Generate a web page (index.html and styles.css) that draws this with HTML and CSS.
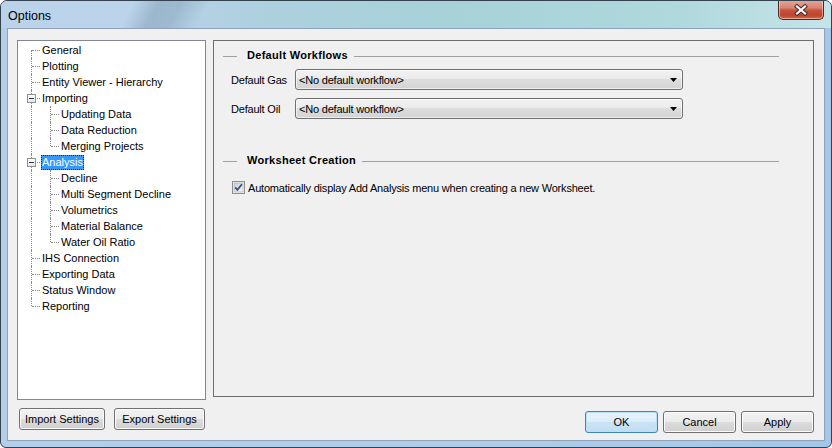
FILE: index.html
```html
<!DOCTYPE html>
<html>
<head>
<meta charset="utf-8">
<title>Options</title>
<link rel="stylesheet" href="styles.css">
</head>
<body>
<div class="window">
  <div class="titlebar">
    <span class="title">Options</span>
    <button class="close" aria-label="Close">
      <svg width="16" height="12" viewBox="0 0 16 12">
        <path d="M4 2.5 L12 9.5 M12 2.5 L4 9.5" stroke="#4a2a2a" stroke-width="4.2" stroke-linecap="square" fill="none"/>
        <path d="M4 2.5 L12 9.5 M12 2.5 L4 9.5" stroke="#ffffff" stroke-width="2.2" stroke-linecap="square" fill="none"/>
      </svg>
    </button>
  </div>
  <div class="client">
    <div class="main">
      <div class="tree">
        <div class="row l0 first"><span class="label">General</span></div>
        <div class="row l0"><span class="label">Plotting</span></div>
        <div class="row l0"><span class="label">Entity Viewer - Hierarchy</span></div>
        <div class="row l0"><span class="exp"></span><span class="label">Importing</span></div>
        <div class="row l1"><span class="label">Updating Data</span></div>
        <div class="row l1"><span class="label">Data Reduction</span></div>
        <div class="row l1 lastchild"><span class="label">Merging Projects</span></div>
        <div class="row l0"><span class="exp"></span><span class="label sel">Analysis</span></div>
        <div class="row l1"><span class="label">Decline</span></div>
        <div class="row l1"><span class="label">Multi Segment Decline</span></div>
        <div class="row l1"><span class="label">Volumetrics</span></div>
        <div class="row l1"><span class="label">Material Balance</span></div>
        <div class="row l1 lastchild"><span class="label">Water Oil Ratio</span></div>
        <div class="row l0"><span class="label">IHS Connection</span></div>
        <div class="row l0"><span class="label">Exporting Data</span></div>
        <div class="row l0"><span class="label">Status Window</span></div>
        <div class="row l0 last"><span class="label">Reporting</span></div>
      </div>
      <div class="panel">
        <div class="sec"><span>Default Workflows</span></div>
        <div class="field">
          <span class="flabel">Default Gas</span>
          <div class="select"><span>&lt;No default workflow&gt;</span>
            <svg class="arrow" width="7" height="4" viewBox="0 0 7 4"><path d="M0 0 H7 L3.5 4 Z" fill="#000"/></svg>
          </div>
        </div>
        <div class="field second">
          <span class="flabel">Default Oil</span>
          <div class="select"><span>&lt;No default workflow&gt;</span>
            <svg class="arrow" width="7" height="4" viewBox="0 0 7 4"><path d="M0 0 H7 L3.5 4 Z" fill="#000"/></svg>
          </div>
        </div>
        <div class="sec sec2"><span>Worksheet Creation</span></div>
        <div class="check">
          <svg class="box" width="13" height="13" viewBox="0 0 13 13">
            <defs>
              <linearGradient id="cb" x1="0" y1="0" x2="1" y2="1">
                <stop offset="0" stop-color="#cbcfd5"/>
                <stop offset="1" stop-color="#f6f6f6"/>
              </linearGradient>
            </defs>
            <rect x="0.5" y="0.5" width="12" height="12" fill="#f4f4f4" stroke="#8e8f8f"/>
            <rect x="2" y="2" width="9" height="9" fill="url(#cb)" stroke="#a9acb0" stroke-width="0.6"/>
            <path d="M3.2 6.4 L5.4 8.9 L9.9 3.3" stroke="#3f4f87" stroke-width="1.8" fill="none"/>
          </svg>
          <span>Automatically display Add Analysis menu when creating a new Worksheet.</span>
        </div>
      </div>
    </div>
    <div class="footer">
      <div class="left">
        <button class="btn imp">Import Settings</button>
        <button class="btn exp-btn">Export Settings</button>
      </div>
      <div class="right">
        <button class="btn dlg default">OK</button>
        <button class="btn dlg">Cancel</button>
        <button class="btn dlg">Apply</button>
      </div>
    </div>
  </div>
</div>
</body>
</html>
```
FILE: styles.css
```css
html, body {
  margin: 0;
  padding: 0;
  background: #ffffff;
}

.window {
  width: 832px;
  height: 448px;
  box-sizing: border-box;
  border: 1px solid #34414f;
  border-radius: 7px 7px 6px 6px;
  overflow: hidden;
  display: flex;
  flex-direction: column;
  background: linear-gradient(to right, #b5cfe9 0%, #afcbe7 60%, #a6c6e8 100%);
  font-family: "Liberation Sans", Arial, sans-serif;
}

.titlebar {
  height: 27px;
  flex: none;
  display: flex;
  align-items: flex-start;
  padding-left: 7px;
  background:
    linear-gradient(118deg, rgba(255,255,255,0) 0px, rgba(255,255,255,0) 118px, rgba(120,150,175,0.45) 140px, rgba(110,140,165,0.35) 160px, rgba(255,255,255,0) 185px),
    linear-gradient(to right, #bad2ea 0%, #bcd4eb 15%, #aed0e0 30%, #a6d2d8 55%, #aed8dc 80%, #c4e4e8 100%);
}

.title {
  font-size: 12.5px;
  color: #000;
  line-height: 14px;
  margin-top: 8px;
}

.close {
  margin-left: auto;
  margin-right: 7px;
  margin-top: -1px;
  width: 46px;
  height: 20px;
  padding: 0;
  border: 1px solid #4f2a24;
  border-top: none;
  border-radius: 0 0 5px 5px;
  background: linear-gradient(#e8a899 0%, #d88473 40%, #c5523e 55%, #c0442c 80%, #d2664b 100%);
  box-shadow: inset 0 0 0 1px rgba(255,220,210,0.55);
  display: flex;
  align-items: center;
  justify-content: center;
}

.client {
  flex: 1;
  margin: 0 6px 6px 6px;
  border: 1px solid #8ea3b9;
  background: #f0f0f0;
  padding: 11px 10px 0 9px;
  display: flex;
  flex-direction: column;
}

.main {
  display: flex;
  gap: 7px;
  align-items: flex-start;
}

/* tree */
.tree {
  width: 189px;
  height: 360px;
  box-sizing: border-box;
  border: 1px solid #828790;
  background: #ffffff;
  padding-top: 1px;
  font-size: 11px;
  color: #000;
}

.row {
  position: relative;
  height: 16px;
  display: flex;
  align-items: center;
  padding-left: 23px;
}

.row.l1 {
  padding-left: 42px;
}

.row::before {
  content: "";
  position: absolute;
  left: 13px;
  top: 0;
  bottom: 0;
  border-left: 1px dotted #8a8a8a;
}

.row.first::before {
  top: 8px;
}

.row.last::before {
  bottom: 8px;
}

.row.l0::after {
  content: "";
  position: absolute;
  left: 14px;
  top: 8px;
  width: 8px;
  border-top: 1px dotted #8a8a8a;
}

.row.l1::after {
  content: "";
  position: absolute;
  left: 32px;
  top: 0;
  bottom: 0;
  border-left: 1px dotted #8a8a8a;
}

.row.l1.lastchild::after {
  bottom: 8px;
}

.row.l1 .label::before {
  content: "";
  position: absolute;
  left: 33px;
  top: 8px;
  width: 8px;
  border-top: 1px dotted #8a8a8a;
}

.label {
  padding: 0 1px;
  height: 15px;
  line-height: 15px;
  white-space: nowrap;
}

.label.sel {
  background: #3399ff;
  color: #ffffff;
  outline: 1px dotted #3a2a10;
  outline-offset: -1px;
}

.exp {
  position: absolute;
  left: 9px;
  top: 4px;
  width: 9px;
  height: 9px;
  box-sizing: border-box;
  border: 1px solid #919191;
  background: linear-gradient(#ffffff, #e6e6e6);
  z-index: 1;
}

.exp::after {
  content: "";
  position: absolute;
  left: 1px;
  top: 3px;
  width: 5px;
  height: 1px;
  background: #1e3a5f;
}

/* right panel */
.panel {
  width: 601px;
  height: 357px;
  box-sizing: border-box;
  border: 1px solid #6d6d6d;
  padding: 7px 34px 0 9px;
  font-size: 11px;
  letter-spacing: -0.2px;
  color: #000;
}

.sec {
  display: flex;
  align-items: center;
  height: 14px;
}

.sec::before {
  content: "";
  width: 14px;
  border-top: 1px solid #a0a0a0;
  margin-right: 10px;
  margin-top: 2px;
}

.sec::after {
  content: "";
  flex: 1;
  border-top: 1px solid #a0a0a0;
  margin-left: 6px;
  margin-top: 2px;
}

.sec span {
  font-weight: bold;
  letter-spacing: 0.3px;
  white-space: nowrap;
}

.sec2 {
  margin-top: 34px;
}

.field {
  display: flex;
  align-items: center;
  margin-top: 7px;
  padding-left: 8px;
}

.field.second {
  margin-top: 8px;
}

.flabel {
  width: 64px;
  white-space: nowrap;
}

.select {
  width: 388px;
  height: 21px;
  box-sizing: border-box;
  border: 1px solid #707070;
  border-radius: 3px;
  background: linear-gradient(#f2f2f2 0%, #ebebeb 45%, #dddddd 50%, #d3d3d3 100%);
  box-shadow: inset 0 0 0 1px rgba(255,255,255,0.6);
  display: flex;
  align-items: center;
  padding-left: 3px;
  white-space: nowrap;
}

.select .arrow {
  margin-left: auto;
  margin-right: 5px;
}

.check {
  display: flex;
  align-items: center;
  gap: 3px;
  margin-top: 14px;
  padding-left: 9px;
}

.check .box {
  flex: none;
}

/* footer */
.footer {
  margin-top: 8px;
  display: flex;
  justify-content: space-between;
  align-items: flex-start;
}

.footer .left {
  display: flex;
  gap: 9px;
  padding-left: 2px;
}

.footer .right {
  display: flex;
  gap: 5px;
  margin-top: 3px;
}

.btn {
  height: 22px;
  box-sizing: border-box;
  padding: 0;
  border: 1px solid #707070;
  border-radius: 3px;
  background: linear-gradient(#f2f2f2 0%, #ebebeb 50%, #dddddd 50%, #cfcfcf 100%);
  box-shadow: inset 0 0 0 1px #fbfbfb;
  font-family: "Liberation Sans", Arial, sans-serif;
  font-size: 11px;
  color: #000;
  text-align: center;
}

.btn.imp {
  width: 86px;
}

.btn.exp-btn {
  width: 91px;
}

.btn.dlg {
  width: 73px;
}

.btn.default {
  border-color: #3c85c0;
  background: linear-gradient(#e8f3fb 0%, #dcedf8 50%, #cbe4f4 50%, #c0ddf0 100%);
  box-shadow: inset 0 0 0 1px #b8e0f6;
}
```
